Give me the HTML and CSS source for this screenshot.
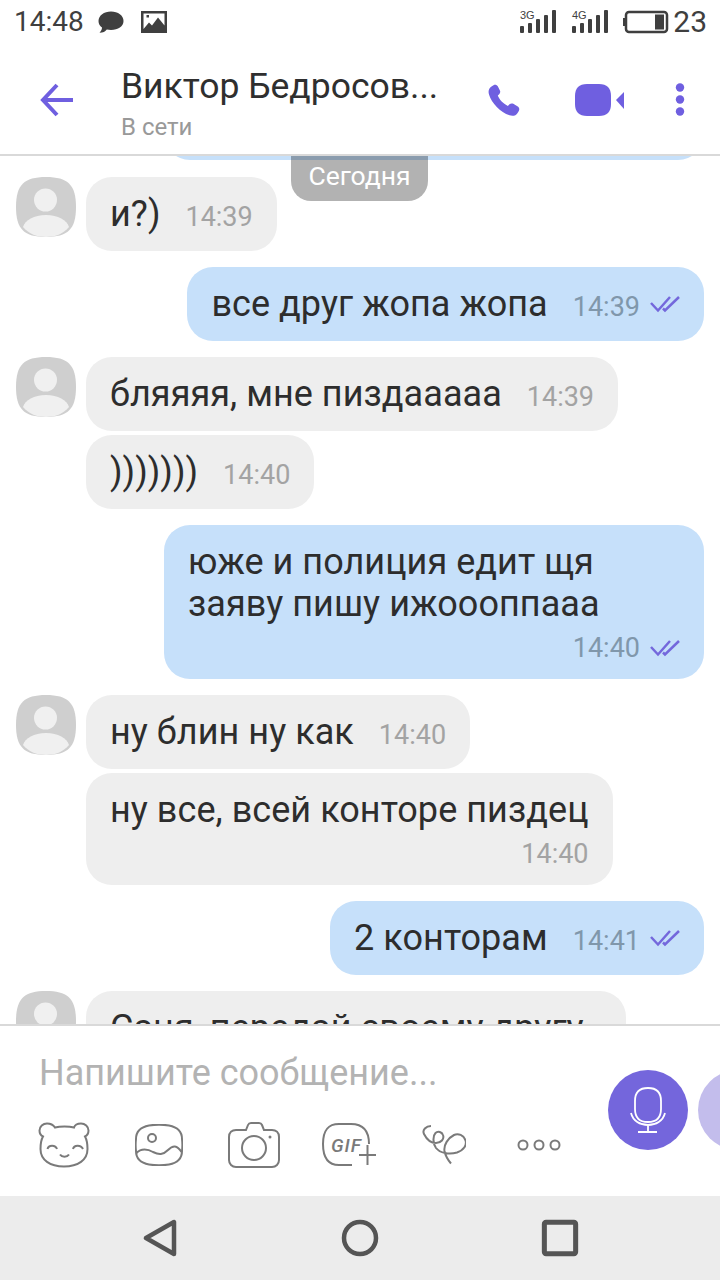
FILE: index.html
```html
<!DOCTYPE html>
<html lang="ru">
<head>
<meta charset="utf-8">
<title>Чат</title>
<link rel="stylesheet" href="styles.css">
</head>
<body>
<div class="screen">
  <div class="status">
    <span class="clock">14:48</span>
    <svg class="st-chat" viewBox="0 0 28 24"><path d="M14 1.500C21 1.500 26.500 5.500 26.500 11C26.500 16.500 21 20 14 20C12.500 20 11 19.800 9.800 19.500C8.500 21.500 6 22.800 2.500 22.800C4 21.500 5 19.500 5 17.600C2.800 16 1.500 13.700 1.500 11C1.500 5.500 7 1.500 14 1.500Z"/></svg>
    <svg class="st-pic" viewBox="0 0 26 22"><path fill-rule="evenodd" d="M0 0H26V22H0ZM2.500 2.500V18L8 11.500L11 14.500L17 6.500L23.500 14.500V2.500ZM5.500 4H8V6.500H5.500Z"/></svg>
    <span class="st-space"></span>
    <svg class="st-net" viewBox="0 0 36 24">
      <text x="0" y="9" class="st-net-label">3G</text>
      <rect x="0" y="16" width="4" height="7" rx="1"/><rect x="8" y="13" width="4" height="10" rx="1"/><rect x="16" y="9" width="4" height="14" rx="1"/><rect x="24" y="5" width="4" height="18" rx="1"/><rect x="32" y="0" width="4" height="23" rx="1"/>
    </svg>
    <svg class="st-net" viewBox="0 0 36 24">
      <text x="0" y="9" class="st-net-label">4G</text>
      <rect x="0" y="16" width="4" height="7" rx="1"/><rect x="8" y="13" width="4" height="10" rx="1"/><rect x="16" y="9" width="4" height="14" rx="1"/><rect x="24" y="5" width="4" height="18" rx="1"/><rect x="32" y="0" width="4" height="23" rx="1"/>
    </svg>
    <svg class="st-batt" viewBox="0 0 46 24"><path d="M2 8H0V16H2Z"/><rect x="3" y="2" width="41" height="20" rx="3" class="st-batt-box"/><rect x="32" y="4.500" width="9" height="15"/></svg>
    <span class="level">23</span>
  </div>

  <header class="head">
    <svg class="back" viewBox="0 0 34 34"><path d="M33 17H3M17 2L3 17L17 32"/></svg>
    <div class="who">
      <div class="name">Виктор Бедросов...</div>
      <div class="presence">В сети</div>
    </div>
    <svg class="phone" viewBox="0 0 32 32"><path d="M5.500 1.200C7 .3 9 .8 9.800 2.300L11.900 6.400C12.600 7.800 12.200 9.300 11.200 10.300L9.800 11.600C10.800 15 15.800 20.500 19.900 21.900L21.500 20.300C22.500 19.300 24 19.100 25.300 19.800L29.800 22.600C31.300 23.500 31.700 25.400 30.800 26.900L29.600 28.900C28 31.500 25 32.400 21.500 31.300C12.500 28.500 3.500 19 1 10.500C-.1 6.800 1 4 3.500 2.400Z"/></svg>
    <svg class="video" viewBox="0 0 50 32"><path d="M12 0H24C32 0 36 4 36 12V20C36 28 32 32 24 32H12C4 32 0 28 0 20V12C0 4 4 0 12 0Z"/><path d="M41 16L49 8V25Z"/></svg>
    <svg class="kebab" viewBox="0 0 10 34"><circle cx="5" cy="4.500" r="4.200"/><circle cx="5" cy="16.500" r="4.200"/><circle cx="5" cy="28.500" r="4.200"/></svg>
  </header>

  <main class="chat">
    <div class="today">Сегодня</div>
    <div class="peek"></div>

    <div class="group">
      <svg class="avatar" viewBox="0 0 60 60"><path class="av-bg" d="M30 0C52 0 60 8 60 30C60 52 52 60 30 60C8 60 0 52 0 30C0 8 8 0 30 0Z"/><circle class="av-fg" cx="29.500" cy="23" r="11.500"/><path class="av-fg" d="M7 50C9 43 18 38 30 38C42 38 51 43 53 50C47 57 39 60 30 60C21 60 13 57 7 50Z"/></svg>
      <div class="stack">
        <div class="bubble in"><span class="text">и?)</span><span class="time">14:39</span></div>
      </div>
    </div>

    <div class="bubble out"><span class="text">все друг жопа жопа</span><span class="time">14:39</span><svg class="seen" viewBox="0 0 30 18"><path d="M1 8L8 15.500L20 2M13 13.500L15 15.500L29 2"/></svg></div>

    <div class="group">
      <svg class="avatar" viewBox="0 0 60 60"><path class="av-bg" d="M30 0C52 0 60 8 60 30C60 52 52 60 30 60C8 60 0 52 0 30C0 8 8 0 30 0Z"/><circle class="av-fg" cx="29.500" cy="23" r="11.500"/><path class="av-fg" d="M7 50C9 43 18 38 30 38C42 38 51 43 53 50C47 57 39 60 30 60C21 60 13 57 7 50Z"/></svg>
      <div class="stack">
        <div class="bubble in"><span class="text">бляяяя, мне пиздааааа</span><span class="time">14:39</span></div>
        <div class="bubble in"><span class="text">)))))))</span><span class="time">14:40</span></div>
      </div>
    </div>

    <div class="bubble out multi wide"><div class="text">юже и полиция едит щя<br>заяву пишу ижоооппааа</div><div class="meta"><span class="time">14:40</span><svg class="seen" viewBox="0 0 30 18"><path d="M1 8L8 15.500L20 2M13 13.500L15 15.500L29 2"/></svg></div></div>

    <div class="group">
      <svg class="avatar" viewBox="0 0 60 60"><path class="av-bg" d="M30 0C52 0 60 8 60 30C60 52 52 60 30 60C8 60 0 52 0 30C0 8 8 0 30 0Z"/><circle class="av-fg" cx="29.500" cy="23" r="11.500"/><path class="av-fg" d="M7 50C9 43 18 38 30 38C42 38 51 43 53 50C47 57 39 60 30 60C21 60 13 57 7 50Z"/></svg>
      <div class="stack">
        <div class="bubble in"><span class="text">ну блин ну как</span><span class="time">14:40</span></div>
        <div class="bubble in multi"><div class="text">ну все, всей конторе пиздец</div><div class="meta"><span class="time">14:40</span></div></div>
      </div>
    </div>

    <div class="bubble out"><span class="text">2 конторам</span><span class="time">14:41</span><svg class="seen" viewBox="0 0 30 18"><path d="M1 8L8 15.500L20 2M13 13.500L15 15.500L29 2"/></svg></div>

    <div class="group">
      <svg class="avatar" viewBox="0 0 60 60"><path class="av-bg" d="M30 0C52 0 60 8 60 30C60 52 52 60 30 60C8 60 0 52 0 30C0 8 8 0 30 0Z"/><circle class="av-fg" cx="29.500" cy="23" r="11.500"/><path class="av-fg" d="M7 50C9 43 18 38 30 38C42 38 51 43 53 50C47 57 39 60 30 60C21 60 13 57 7 50Z"/></svg>
      <div class="stack">
        <div class="bubble in cut"><span class="text">Саня, передай своему другу</span></div>
      </div>
    </div>
  </main>

  <section class="composer">
    <div class="compose-left">
      <div class="placeholder">Напишите сообщение...</div>
      <div class="tools">
        <span class="tool"><svg viewBox="0 0 52 46"><path d="M17 5.500C22 4 31 4 36 5.500C37 2.500 40 1.500 43 1.500C47 1.500 50.500 4.500 50.500 8.500C50.500 11 49 13.500 47 14.500C49 18 49.500 23 49.500 27C49.500 38 40 44.500 26 44.500C12 44.500 2.500 38 2.500 27C2.500 23 3 18 5 14.500C3 13.500 1.500 11 1.500 8.500C1.500 4.500 5 1.500 9 1.500C12 1.500 15 2.500 17 5.500Z"/><path d="M9.500 27C10.500 22.500 17.500 22.500 19 27M35 27C36 22.500 43 22.500 45 27M22 32.500C24 35.500 29 35.500 31 32.500"/></svg></span>
        <span class="tool"><svg viewBox="0 0 48 42"><path d="M14 1.500C20 .5 28 .5 34 1.500C42 3 47 7 47 15C47.500 19 47.500 23 47 27C47 35 42 39 34 40.500C28 41.500 20 41.500 14 40.500C6 39 1 35 1 27C.5 23 .5 19 1 15C1 7 6 3 14 1.500Z"/><circle cx="17" cy="14" r="4"/><path d="M1.500 29C6 24 13 25 18 28C24 31 28 31 33 26C38 21 42 21 46.500 28"/></svg></span>
        <span class="tool"><svg viewBox="0 0 52 46"><path d="M18 8L20 3C20.500 1.800 21.500 1 23 1H31C32.500 1 33.500 1.800 34 3L36 8H44C48 8 51 10.500 51 15V38C51 42 48 45 44 45H8C4 45 1 42 1 38V15C1 10.500 4 8 8 8Z"/><circle cx="26" cy="26" r="12"/><circle class="solid" cx="42" cy="15" r="1.500"/></svg></span>
        <span class="tool gif"><svg viewBox="0 0 56 46"><path d="M48 22C48 8 42 2 30 2H18C7 2 2 8 2 22C2 36 7 43 18 43H31"/><text x="10" y="30" class="gif-label">GIF</text><path d="M38 33H55M46.500 23V43"/></svg></span>
        <span class="tool"><svg viewBox="0 0 44 44"><path d="M9 3C4 3 0 7 2 11C5 17 10 20 14 20C19 20 22.500 16 21 12C20 9 16 7.500 13.500 10C10.500 13 11 21 14 25C18 30 27 32 35 29.500C42 27 45 22 43.500 17.500C42 12 36 10 32 12C26 15 21.500 22 22.500 28C23.500 33 26 37 29 40.500"/></svg></span>
        <span class="tool"><svg viewBox="0 0 44 12"><circle cx="6" cy="6" r="4.500"/><circle cx="22" cy="6" r="4.500"/><circle cx="38" cy="6" r="4.500"/></svg></span>
      </div>
    </div>
    <div class="compose-right">
      <div class="mic">
        <svg viewBox="0 0 36 46"><path d="M18 1C27 1 31 6 31 14V22C31 30 27 35 18 35C9 35 5 30 5 22V14C5 6 9 1 18 1Z"/><path d="M1 26C3 34 10 38 18 38C26 38 33 34 35 26M18 38V45M8 45H27"/></svg>
      </div>
      <div class="send-ghost"></div>
    </div>
  </section>

  <nav class="nav">
    <span class="nav-cell"><svg viewBox="0 0 34 38"><path d="M31 3V35L3 19Z"/></svg></span>
    <span class="nav-cell"><svg viewBox="0 0 38 38"><circle cx="19" cy="19" r="16"/></svg></span>
    <span class="nav-cell"><svg viewBox="0 0 34 34"><rect x="3" y="3" width="28" height="28" rx="1.500"/></svg></span>
  </nav>
</div>
</body>
</html>
```
FILE: styles.css
```css
* { box-sizing: border-box; }
html, body { margin: 0; padding: 0; }
body { font-family: Roboto, "Noto Sans", sans-serif; background: #fff; }

.screen { width: 720px; height: 1280px; display: flex; flex-direction: column; overflow: hidden; background: #fff; }

/* status bar */
.status { height: 46px; flex: none; display: flex; align-items: center; padding: 0 13px 2px 14px; color: #3f3f3f; fill: #3f3f3f; }
.clock { font-size: 28px; line-height: 32px; }
.st-chat { width: 28px; height: 24px; margin-left: 13px; }
.st-pic { width: 26px; height: 22px; margin-left: 16px; }
.st-space { flex: 1; }
.st-net { width: 36px; height: 24px; margin-left: 16px; overflow: visible; }
.st-net-label { font-size: 11px; font-family: "Liberation Sans", sans-serif; }
.st-batt { width: 46px; height: 24px; margin-left: 15px; }
.st-batt-box { fill: none; stroke: #3f3f3f; stroke-width: 2.500; }
.level { font-size: 30px; line-height: 32px; margin-left: 4px; }

/* header */
.head { height: 110px; flex: none; display: flex; align-items: center; border-bottom: 2px solid #d9d9d9; padding: 0 0 0 40px; position: relative; z-index: 3; background: #fff; }
.back { width: 34px; height: 34px; fill: none; stroke: #6f5fe0; stroke-width: 4; flex: none; }
.who { margin-left: 47px; width: 367px; flex: none; display: flex; flex-direction: column; padding-top: 6px; }
.name { font-size: 35.500px; line-height: 40px; color: #2f2f2f; white-space: nowrap; }
.presence { font-size: 24px; line-height: 28px; color: #999; margin-top: 7px; }
.phone { width: 32px; height: 32px; fill: #6f5fe0; flex: none; }
.video { width: 50px; height: 32px; fill: #6f5fe0; flex: none; margin-left: 55px; }
.kebab { width: 10px; height: 34px; fill: #6f5fe0; flex: none; margin-left: 50px; }

/* chat */
.chat { flex: 1; min-height: 0; overflow: hidden; position: relative; display: flex; flex-direction: column; padding: 0 16px; }
.today { position: absolute; left: 291px; top: -1px; width: 137px; height: 46px; padding-bottom: 5px; border-radius: 0 0 20px 20px; background: rgba(0, 0, 0, .3); color: #fff; font-size: 26.500px; display: flex; align-items: center; justify-content: center; z-index: 2; }
.peek { height: 60px; margin-top: -56px; width: 540px; flex: none; align-self: flex-end; background: #c6e0fa; border-radius: 0 0 26px 26px; }
.group { display: flex; gap: 10px; align-items: flex-start; flex: none; margin-top: 16px; }
.peek + .group { margin-top: 17px; }
.avatar { width: 60px; height: 60px; flex: none; }
.av-bg { fill: #cfcfcf; }
.av-fg { fill: #f0f0f0; }
.stack { display: flex; flex-direction: column; align-items: flex-start; gap: 4px; }
.bubble { display: flex; align-items: baseline; border-radius: 26px; padding: 16px 24px; min-height: 74px; flex: none; }
.in { background: #eee; }
.out { background: #c6e0fa; align-self: flex-end; margin-top: 16px; }
.text { font-size: 36px; line-height: 42px; color: #2d2d2d; letter-spacing: .05px; white-space: nowrap; }
.time { font-size: 27px; line-height: 30px; color: #a3a3a3; margin-left: 25px; }
.out .time { color: #8097ab; }
.seen { width: 30px; height: 18px; fill: none; stroke: #7468dc; stroke-width: 2.500; margin-left: 10px; align-self: center; }
.multi { display: block; }
.multi .meta { display: flex; justify-content: flex-end; align-items: flex-end; height: 38px; }
.multi .seen { align-self: flex-end; margin-bottom: 6px; }
.multi .time { margin-left: 0; }
.wide { width: 540px; }
.cut { width: 540px; }

/* composer */
.composer { height: 172px; flex: none; border-top: 2px solid #d9d9d9; background: #fff; display: flex; position: relative; z-index: 3; }
.compose-left { width: 608px; flex: none; display: flex; flex-direction: column; }
.placeholder { font-size: 36px; line-height: 40px; color: #b3b3b3; margin: 27px 0 0 39px; white-space: nowrap; }
.tools { display: grid; grid-template-columns: repeat(6, 95px); margin: 26px 0 0 16px; justify-items: center; align-items: center; height: 52px; }
.tool { display: flex; align-items: center; justify-content: center; }
.tool svg { fill: none; stroke: #7a7a7a; stroke-width: 2; display: block; height: 46px; width: 52px; }
.tool:nth-child(2) svg { width: 48px; height: 42px; }
.tool:nth-child(5) svg { width: 44px; height: 44px; }
.tool:nth-child(6) svg { width: 44px; height: 12px; }
.tool.gif svg { width: 56px; height: 46px; }
.solid { fill: #7a7a7a; stroke: none; }
.gif-label { font-family: Roboto, sans-serif; font-size: 19px; font-style: italic; font-weight: 500; fill: #7a7a7a; stroke: none; letter-spacing: 1px; }
.compose-right { display: flex; gap: 10px; padding-top: 44px; flex: none; }
.mic { width: 80px; height: 80px; border-radius: 50%; background: #7466dc; display: flex; align-items: center; justify-content: center; flex: none; }
.mic svg { width: 36px; height: 46px; fill: none; stroke: #fff; stroke-width: 1.800; }
.send-ghost { width: 80px; height: 80px; border-radius: 50%; background: #c3bdec; flex: none; }

/* nav */
.nav { height: 84px; flex: none; background: #ececec; display: flex; justify-content: center; align-items: center; }
.nav-cell { width: 200px; display: flex; justify-content: center; }
.nav-cell svg { height: 38px; width: 38px; fill: none; stroke: #555; stroke-width: 4.500; stroke-linejoin: round; }
```
